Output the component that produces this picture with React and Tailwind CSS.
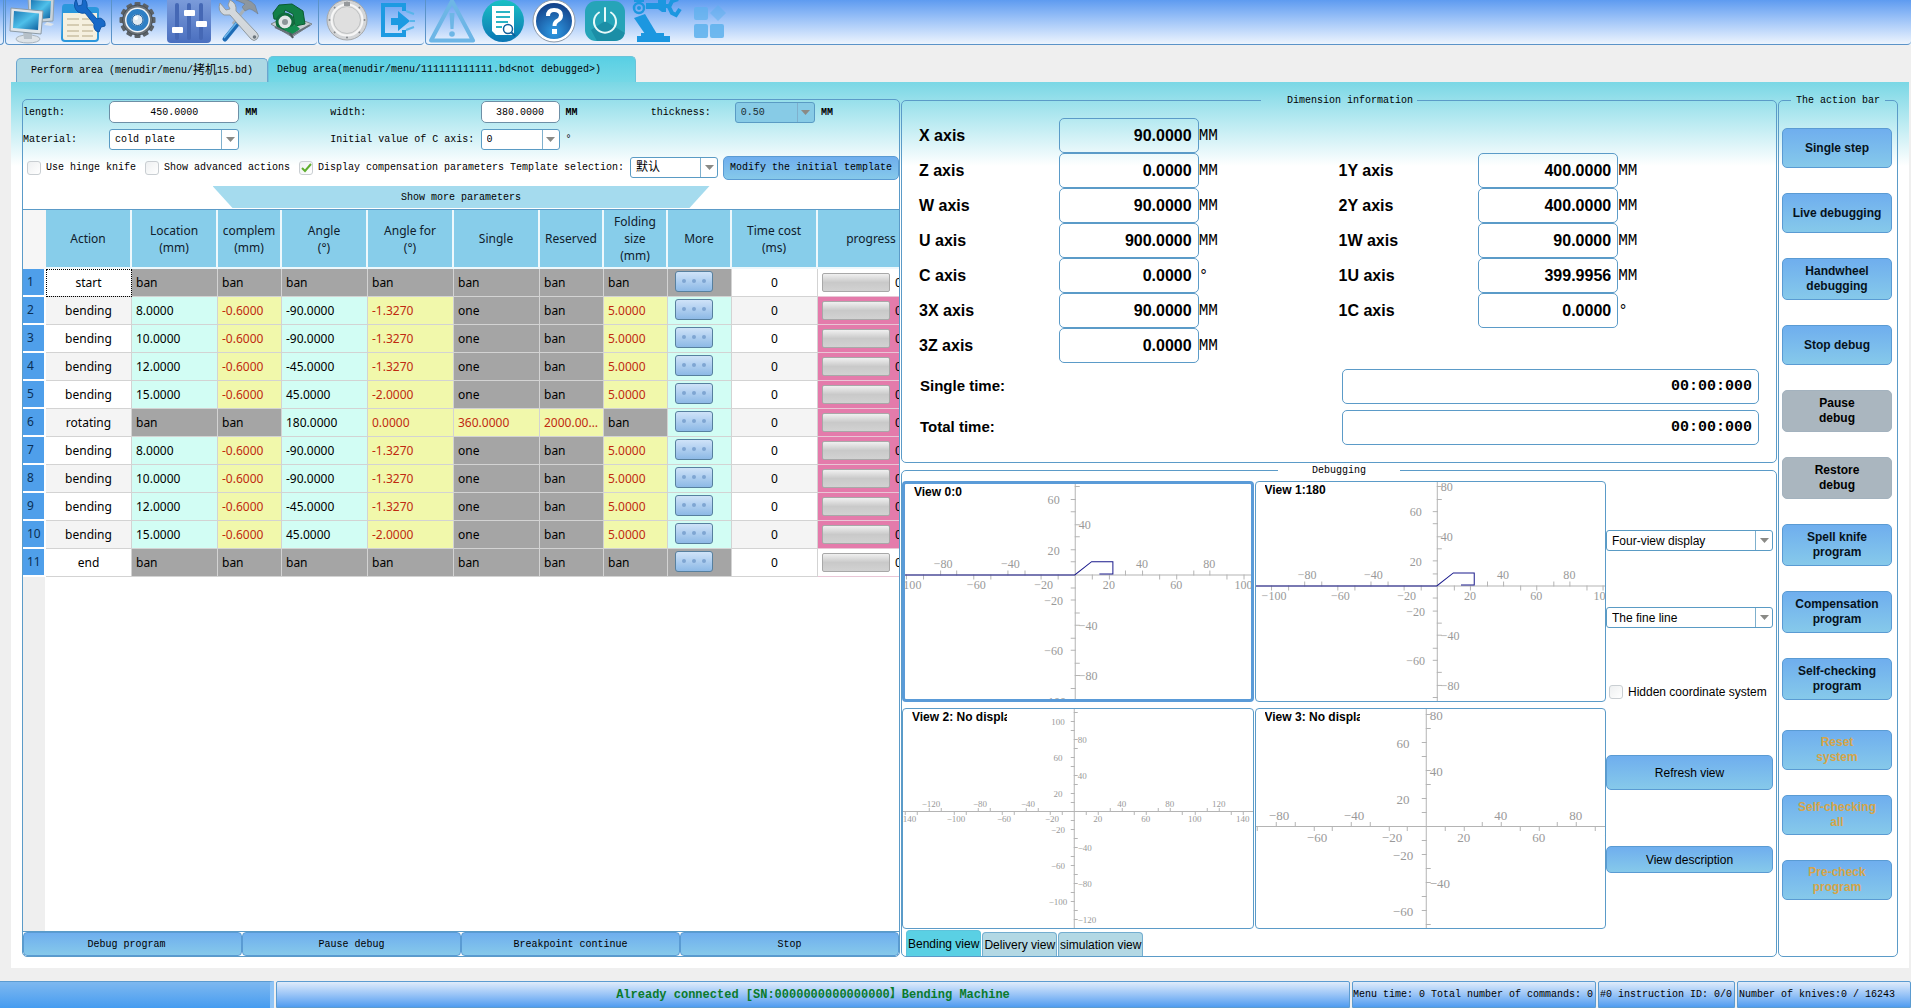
import React, { useState } from 'react';
import clsx from 'clsx';

const MONO = "font-['Liberation_Mono','Noto_Sans_CJK_SC',monospace] text-[10px]";
const ARIAL = "font-['Liberation_Sans',sans-serif]";
const BLUE_BUTTON = 'border border-[#5a9bd3] bg-linear-to-b from-[#6faeee] to-[#86c9ea]';

const TOOLBAR_GROUPS = [
  [
    { name: 'Computer', icon: MonitorsIcon },
    { name: 'Project settings', icon: FolderWrenchIcon },
  ],
  [
    { name: 'System settings', icon: GearIcon },
    { name: 'Parameters', icon: SlidersIcon },
    { name: 'Tools', icon: ToolsIcon },
    { name: 'Knife library', icon: SawIcon },
  ],
  [
    { name: 'Emergency', icon: DiscIcon },
    { name: 'Exit', icon: ExitIcon },
  ],
  [
    { name: 'Alarms', icon: WarningIcon },
    { name: 'Log', icon: LogIcon },
    { name: 'Help', icon: HelpIcon },
    { name: 'Power', icon: PowerIcon },
    { name: 'Robot', icon: RobotIcon },
    { name: 'Modules', icon: BlocksIcon },
  ],
];

const COLUMNS = [
  { lines: ['Action'], width: 86 },
  { lines: ['Location', '(mm)'], width: 86 },
  { lines: ['complem', '(mm)'], width: 64 },
  { lines: ['Angle', '(°)'], width: 86 },
  { lines: ['Angle for', '(°)'], width: 86 },
  { lines: ['Single'], width: 86 },
  { lines: ['Reserved'], width: 64 },
  { lines: ['Folding', 'size', '(mm)'], width: 64 },
  { lines: ['More'], width: 64 },
  { lines: ['Time cost', '(ms)'], width: 86 },
  { lines: ['progress'], width: 108 },
];

const bend = (location, angle, angleFor) => ({
  action: 'bending',
  cells: [location, '-0.6000', angle, angleFor, 'one', 'ban', '5.0000'],
});

const ROWS = [
  { action: 'start', cells: ['ban', 'ban', 'ban', 'ban', 'ban', 'ban', 'ban'] },
  bend('8.0000', '-90.0000', '-1.3270'),
  bend('10.0000', '-90.0000', '-1.3270'),
  bend('12.0000', '-45.0000', '-1.3270'),
  bend('15.0000', '45.0000', '-2.0000'),
  { action: 'rotating', cells: ['ban', 'ban', '180.0000', '0.0000', '360.0000', '2000.0000', 'ban'] },
  bend('8.0000', '-90.0000', '-1.3270'),
  bend('10.0000', '-90.0000', '-1.3270'),
  bend('12.0000', '-45.0000', '-1.3270'),
  bend('15.0000', '45.0000', '-2.0000'),
  { action: 'end', cells: ['ban', 'ban', 'ban', 'ban', 'ban', 'ban', 'ban'] },
];

const AXES = [
  [{ name: 'X axis', value: '90.0000', unit: 'MM' }, null],
  [{ name: 'Z axis', value: '0.0000', unit: 'MM' }, { name: '1Y axis', value: '400.0000', unit: 'MM' }],
  [{ name: 'W axis', value: '90.0000', unit: 'MM' }, { name: '2Y axis', value: '400.0000', unit: 'MM' }],
  [{ name: 'U axis', value: '900.0000', unit: 'MM' }, { name: '1W axis', value: '90.0000', unit: 'MM' }],
  [{ name: 'C axis', value: '0.0000', unit: '°' }, { name: '1U axis', value: '399.9956', unit: 'MM' }],
  [{ name: '3X axis', value: '90.0000', unit: 'MM' }, { name: '1C axis', value: '0.0000', unit: '°' }],
  [{ name: '3Z axis', value: '0.0000', unit: 'MM' }, null],
];

const VIEWS = [
  { title: 'View 0:0', width: 346, height: 214, ox: 170, oy: 90, sx: 1.68, sy: 1.255, size: 12, part: true },
  { title: 'View 1:180', width: 350, height: 218, ox: 181, oy: 103, sx: 1.65, sy: 1.235, size: 12, part: true },
  { title: 'View 2: No display', width: 350, height: 219, ox: 171, oy: 102, sx: 1.205, sy: 0.9, size: 9 },
  { title: 'View 3: No display', width: 350, height: 219, ox: 170, oy: 117, sx: 1.875, sy: 1.4, size: 13 },
];

const ACTIONS = [
  { lines: ['Single step'] },
  { lines: ['Live debugging'] },
  { lines: ['Handwheel', 'debugging'] },
  { lines: ['Stop debug'] },
  { lines: ['Pause', 'debug'], kind: 'disabled' },
  { lines: ['Restore', 'debug'], kind: 'disabled' },
  { lines: ['Spell knife', 'program'] },
  { lines: ['Compensation', 'program'] },
  { lines: ['Self-checking', 'program'] },
  { lines: ['Reset', 'system'], kind: 'system' },
  { lines: ['Self-checking', 'all'], kind: 'system' },
  { lines: ['Pre-check', 'program'], kind: 'system' },
];

/* ---------- toolbar icons ---------- */

function MonitorsIcon() {
  return (
    <svg width="52" height="44" viewBox="5 0 52 44">
      <defs>
        <linearGradient id="screen" x1="0" y1="0" x2="1" y2="1">
          <stop offset="0" stopColor="#1c78b4" />
          <stop offset="0.5" stopColor="#4fc0ea" />
          <stop offset="1" stopColor="#0d5f9e" />
        </linearGradient>
      </defs>
      <path d="M27 -3 L53 -2 L52 21 L40 22 L28 18Z" fill="#c9d3da" stroke="#8fa0ad" />
      <path d="M30 0 L50 1 L49 18 L40 19 L30 16Z" fill="url(#screen)" />
      <path d="M46 22 L53 24 L50 26 L43 25Z" fill="#dfe5ea" />
      <ellipse cx="27" cy="39" rx="12" ry="4" fill="#dde3e8" stroke="#a9b4bd" />
      <path d="M22 32 L31 33 L31 39 L23 39Z" fill="#b6c0c8" />
      <path d="M10 8 L42 11 L40 34 L9 31Z" fill="#dfe5ea" stroke="#8d9ba6" />
      <path d="M13 11 L38 13.500 L37 30 L12 28Z" fill="url(#screen)" />
    </svg>
  );
}

function FolderWrenchIcon() {
  return (
    <svg width="52" height="44" viewBox="57 0 52 44">
      <path d="M61 8 Q61 4 64 4 H72 L75 7 H94 Q98 7 98 10 V38 Q98 42 94 42 H64 Q60 42 60 38Z" fill="#2b97dc" />
      <path d="M62 13 H96 V38 Q96 40 94 40 H64 Q62 40 62 38Z" fill="#f5f0df" />
      <g stroke="#d5ccb2" strokeWidth="2">
        <path d="M66 19 H78 M66 25 H78 M66 31 H78 M66 36 H78 M81 19 H92 M81 25 H92 M81 31 H92 M81 36 H92" />
      </g>
      <path
        d="M75 -1 Q71 7 77 12 Q81 14 84 13 L93 24 Q92 31 98 32 L100 27 L104 26 Q105 20 99 18 L96 19 L86 8 Q87 1 82 -2 L81 5 L77 6Z"
        fill="#1769c8"
        stroke="#0f56a8"
      />
    </svg>
  );
}

function GearIcon() {
  const teeth = [0, 30, 60, 90, 120, 150, 180, 210, 240, 270, 300, 330];
  return (
    <svg width="50" height="44" viewBox="111 0 50 44">
      {teeth.map((angle) => (
        <rect key={angle} x="133.500" y="2" width="6" height="8" rx="1" fill="#5b6268" transform={`rotate(${angle} 136.500 20)`} />
      ))}
      <circle cx="136.500" cy="20" r="15" fill="#6b7278" stroke="#474d52" />
      <circle cx="136.500" cy="20" r="12.500" fill="#f1f4f6" />
      <circle cx="136.500" cy="20" r="8.500" fill="none" stroke="#2f7fc4" strokeWidth="5" />
      <circle cx="136.500" cy="20" r="5.500" fill="#dfe9f1" stroke="#1d5e9b" />
      <circle cx="135" cy="18" r="2" fill="#fff" />
    </svg>
  );
}

function SlidersIcon() {
  return (
    <svg width="52" height="44" viewBox="161 0 52 44">
      <defs>
        <linearGradient id="mixer" x1="0" y1="0" x2="0" y2="1">
          <stop offset="0" stopColor="#7f9fdc" />
          <stop offset="1" stopColor="#4a6fbf" />
        </linearGradient>
      </defs>
      <rect x="166" y="-4" width="44" height="47" rx="4" fill="url(#mixer)" />
      <path d="M176 5 V38 M188 5 V38 M200 5 V38" stroke="#4568b5" strokeWidth="4" strokeLinecap="round" />
      <rect x="171" y="27" width="11" height="6" rx="1" fill="#fff" />
      <rect x="183" y="10" width="11" height="6" rx="1" fill="#fff" />
      <rect x="195" y="21" width="11" height="6" rx="1" fill="#fff" />
    </svg>
  );
}

function ToolsIcon() {
  return (
    <svg width="50" height="44" viewBox="213 0 50 44">
      <path d="M246 6 L232 24" stroke="#a6b0b8" strokeWidth="3" />
      <path d="M237 23 L224 39" stroke="#1c6bb5" strokeWidth="5" strokeLinecap="round" />
      <path d="M236 22 L223 38" stroke="#6db6ea" strokeWidth="1.500" />
      <path d="M235 0 Q247 -3 254 5 L257 14 Q251 9 248 9 L244 11 L241 7 L244 4Z" fill="#8d979f" stroke="#6c757c" strokeWidth="0.500" />
      <path
        d="M219 3 Q216 11 223 15 L229 15 L250 39 Q253 42 256 39 Q259 36 256 33 L235 11 Q236 3 229 0 L227 5 L229 9 L225 10Z"
        fill="#d3d8dc"
        stroke="#8f999f"
      />
      <circle cx="253.500" cy="37" r="1.800" fill="#6c757c" />
    </svg>
  );
}

function SawIcon() {
  return (
    <svg width="53" height="44" viewBox="263 0 53 44">
      <path d="M270 24 L288 15 L311 24 L291 37Z" fill="#c8ced2" stroke="#7d878d" />
      <path d="M272 13 L278 5 L291 4 L302 11 L304 24 L294 26 L292 14 L284 10 L281 20 L273 19Z" fill="#128048" stroke="#0b5a32" />
      <circle cx="284" cy="22" r="8" fill="#e2e7e8" stroke="#0f6c3d" strokeWidth="3" />
      <circle cx="284" cy="22" r="3" fill="#8c9699" />
      <path d="M283 29 L295 25 L299 29 L290 36Z" fill="#138d50" />
      <path d="M274 27 L291 35 L309 25" fill="none" stroke="#66717a" strokeWidth="2" />
      <path d="M289 33 L292 38" stroke="#4e585e" strokeWidth="2" />
    </svg>
  );
}

function DiscIcon() {
  const bolts = [0, 45, 90, 135, 180, 225, 270, 315];
  return (
    <svg width="53" height="44" viewBox="318 0 53 44">
      <circle cx="346" cy="20" r="20" fill="#d3d5d7" stroke="#a5a8ab" />
      <circle cx="346" cy="20" r="15.500" fill="#e3e3e3" stroke="#f6f6f6" strokeWidth="2" />
      <circle cx="346" cy="20" r="13.500" fill="#dfdfdf" stroke="#bfc1c2" />
      {bolts.map((angle) => (
        <circle key={angle} cx="346" cy="2.500" r="1" fill="#85888b" transform={`rotate(${angle} 346 20)`} />
      ))}
      <path d="M343 2 H349 V6 H343Z" fill="#96999c" />
    </svg>
  );
}

function ExitIcon() {
  return (
    <svg width="52" height="44" viewBox="371 0 52 44">
      <path d="M403 11 V5 H382 V35 H403 V30" fill="none" stroke="#1d9ae2" strokeWidth="4" />
      <path d="M390 18 H397 V11 L409 21 L397 31 V25 H390Z" fill="#1d9ae2" />
      <path d="M405 11 L413 14 M409 21 L414 21 M405 30 L413 27" stroke="#58b5ea" strokeWidth="2" />
    </svg>
  );
}

function WarningIcon() {
  return (
    <svg width="52" height="44" viewBox="425 0 52 44">
      <path d="M451 1 L472 40.500 H430Z" fill="none" stroke="#6db6e6" strokeWidth="4" strokeLinejoin="round" />
      <path d="M448.500 13 H453.500 L452.500 29 H449.500Z" fill="#6db6e6" />
      <circle cx="451" cy="34" r="2.800" fill="#6db6e6" />
    </svg>
  );
}

function LogIcon() {
  return (
    <svg width="50" height="44" viewBox="477 0 50 44">
      <defs>
        <linearGradient id="log" x1="0" y1="0" x2="0" y2="1">
          <stop offset="0" stopColor="#1ac0c4" />
          <stop offset="1" stopColor="#0b76b4" />
        </linearGradient>
      </defs>
      <circle cx="502" cy="21" r="21" fill="url(#log)" />
      <path d="M491 6 H513 V35 H495 L491 31Z" fill="#fff" />
      <path d="M495 12 H509 M495 17 H509 M495 22 H507 M495 27 H501" stroke="#2bb3c4" strokeWidth="2" />
      <circle cx="507" cy="29" r="4.500" fill="#fff" stroke="#0f5f9c" strokeWidth="1.500" />
      <path d="M510.500 32.500 L514 36" stroke="#0f5f9c" strokeWidth="2" />
    </svg>
  );
}

function HelpIcon() {
  return (
    <svg width="52" height="44" viewBox="527 0 52 44">
      <defs>
        <radialGradient id="help" cx="0.5" cy="0.8" r="0.8">
          <stop offset="0" stopColor="#2f9be4" />
          <stop offset="1" stopColor="#123f87" />
        </radialGradient>
      </defs>
      <circle cx="553" cy="21" r="21" fill="#fff" stroke="#8d99a8" />
      <circle cx="553" cy="21" r="18" fill="url(#help)" />
      <path d="M547 16 Q547 10 553 10 Q560 10 560 15.500 Q560 19 556 21 Q553.500 22.500 553.500 26" fill="none" stroke="#fff" strokeWidth="4" />
      <rect x="551" y="29" width="5" height="5" fill="#fff" />
    </svg>
  );
}

function PowerIcon() {
  return (
    <svg width="50" height="44" viewBox="579 0 50 44">
      <rect x="584" y="1" width="40" height="40" rx="11" fill="#26a4b8" />
      <path d="M604 21 L624 33 V30 Q624 41 613 41 H596 L590 30Z" fill="#1b8ea6" />
      <path d="M598 12.500 A11 11 0 1 0 610 12.500" fill="none" stroke="#e8fafa" strokeWidth="2" strokeLinecap="round" />
      <path d="M604 8 V21" stroke="#e8fafa" strokeWidth="2" strokeLinecap="round" />
    </svg>
  );
}

function RobotIcon() {
  return (
    <svg width="56" height="44" viewBox="629 0 56 44">
      <circle cx="638" cy="8" r="5" fill="none" stroke="#1c97e0" strokeWidth="2.500" />
      <circle cx="638" cy="8" r="2" fill="#1c97e0" />
      <path d="M633 1 H643" stroke="#1c97e0" strokeWidth="2" />
      <path d="M645 3 H659 V9 H645Z" fill="#1c97e0" />
      <path d="M657 0 H665 V12 H661 L657 9Z" fill="#1c97e0" />
      <path d="M663 6 H669 M677 -1 L671 1 L668 7 L671 13 L675 15 L679 9" fill="none" stroke="#1c97e0" strokeWidth="4" />
      <path d="M633 18 L644 14 L656 34 H644Z" fill="#1c97e0" />
      <path d="M636 42 V36 H640 V33 H663 V36 H669 V42Z" fill="#1c97e0" />
    </svg>
  );
}

function BlocksIcon() {
  return (
    <svg width="50" height="44" viewBox="685 0 50 44" fill="#5cb0ec">
      <rect x="693" y="7" width="14" height="13" rx="2" opacity="0.7" />
      <path d="M717 5 L725 13 L717 21 L709 13Z" opacity="0.5" />
      <rect x="693" y="24" width="14" height="14" rx="2" opacity="0.85" />
      <rect x="709" y="24" width="14" height="14" rx="2" opacity="0.85" />
    </svg>
  );
}

/* ---------- shared controls ---------- */

function Dropdown({ id, label, options, disabled, className, selectClassName }) {
  return (
    <div className={clsx('relative h-[21px] rounded-[3px] border border-[#5a9bc4]', disabled ? 'bg-[#87cbe6]' : 'bg-white', className)}>
      <select
        id={id}
        aria-label={label}
        disabled={disabled}
        className={clsx('block h-full w-full appearance-none pr-5 pl-[5px] text-black outline-none', disabled && 'opacity-80', selectClassName)}
      >
        {options.map((option) => (
          <option key={option}>{option}</option>
        ))}
      </select>
      <span className="pointer-events-none absolute inset-y-0 right-0 flex w-[17px] items-center justify-center border-l border-[#7fb0cd]">
        <svg width="9" height="5" viewBox="0 0 9 5">
          <path d="M0 0 H9 L4.500 5Z" fill="#8a8a86" />
        </svg>
      </span>
    </div>
  );
}

function Checkbox({ label, defaultChecked, className }) {
  return (
    <label className={clsx('flex items-center gap-[5px] whitespace-nowrap', className)}>
      <span className="relative block h-[14px] w-[14px]">
        <input
          type="checkbox"
          defaultChecked={defaultChecked}
          className="peer block h-[14px] w-[14px] appearance-none rounded-[3px] border border-[#c9ced2] bg-linear-to-br from-[#eef0f1] to-white"
        />
        <svg
          className="pointer-events-none absolute inset-0 hidden peer-checked:block"
          width="14"
          height="14"
          viewBox="0 0 14 14"
        >
          <path d="M3 7 L6 10 L12 3" fill="none" stroke="#5fae2e" strokeWidth="2" />
        </svg>
      </span>
      {label}
    </label>
  );
}

function Toolbar() {
  return (
    <header className="flex h-[45px] gap-px overflow-hidden bg-linear-to-b from-[#5e9bf0] to-[#f0f6fd]">
      <div className="w-1 rounded-br-[4px] border-r border-b border-[#5b93c8]" />
      {TOOLBAR_GROUPS.map((group, index) => (
        <div
          key={index}
          className={clsx('flex rounded-b-[4px] border-b border-l border-[#5b93c8]', index === TOOLBAR_GROUPS.length - 1 && 'flex-1')}
        >
          {group.map(({ name, icon: Icon }) => (
            <button key={name} type="button" aria-label={name} className="block">
              <Icon />
            </button>
          ))}
        </div>
      ))}
    </header>
  );
}

/* ---------- left panel ---------- */

function ParameterForm() {
  const field = 'h-[22px] w-full min-w-0 rounded-[5px] border border-[#6d8fa6] bg-white text-center text-black outline-none';
  return (
    <form className={clsx(MONO, 'text-black')}>
      <div className="grid grid-cols-[86fr_130fr_91fr_150fr_79fr_91fr_84fr_80fr_84fr] grid-rows-[24px_30px] items-center">
        <label htmlFor="length">length:</label>
        <input id="length" className={field} defaultValue="450.0000" />
        <span className="pl-[6px] font-bold">MM</span>
        <label htmlFor="width">width:</label>
        <input id="width" className={field} defaultValue="380.0000" />
        <span className="pl-[6px] font-bold">MM</span>
        <label htmlFor="thickness">thickness:</label>
        <Dropdown id="thickness" options={['0.50']} disabled />
        <span className="pl-[6px] font-bold">MM</span>

        <label htmlFor="material">Material:</label>
        <Dropdown id="material" options={['cold plate']} />
        <span />
        <label htmlFor="c-axis">Initial value of C axis:</label>
        <Dropdown id="c-axis" options={['0']} />
        <span className="pl-[6px]">°</span>
      </div>
      <div className="flex h-[27px] items-center pl-1 whitespace-nowrap">
        <Checkbox label="Use hinge knife" />
        <Checkbox label="Show advanced actions" className="ml-[9px]" />
        <Checkbox label="Display compensation parameters" defaultChecked className="ml-[9px]" />
        <label htmlFor="template" className="ml-[6px]">
          Template selection:
        </label>
        <Dropdown id="template" options={['默认']} className="ml-[6px] w-[88px]" selectClassName="text-xs" />
        <button type="button" className={clsx(BLUE_BUTTON, 'ml-[5px] h-6 flex-1 rounded-[5px]')}>
          Modify the initial template
        </button>
      </div>
      <button
        type="button"
        className="mx-auto mt-[5px] block h-[22px] w-[497px] bg-[#a5dbee] [clip-path:polygon(0_0,100%_0,calc(100%-20px)_100%,20px_100%)]"
      >
        Show more parameters
      </button>
    </form>
  );
}

function cellColor(value, column) {
  if (value === 'ban' || value === 'one') return 'bg-[#a5a5a5] text-black';
  if (column === 0 || column === 2) return 'bg-[#d2fdf4] text-black';
  return 'bg-[#f1f8ab] text-[#c02a10]';
}

function ProgramTable() {
  return (
    <div className="mt-px flex-1 overflow-hidden border-t border-[#5b9bc8] bg-[linear-gradient(to_right,#efefef_22px,#ffffff_22px)]">
      <table className="w-[903px] table-fixed border-separate border-spacing-0 font-['Noto_Sans',sans-serif] text-xs text-black">
        <colgroup>
          <col className="w-[23px]" />
          {COLUMNS.map((column) => (
            <col key={column.lines[0]} style={{ width: column.width }} />
          ))}
        </colgroup>
        <thead>
          <tr className="h-[59px]">
            <td className="bg-[#f6f6f6]" />
            {COLUMNS.map((column) => (
              <th
                key={column.lines[0]}
                className="border-r-2 border-b-2 border-[#eef8fc] bg-[#87cdea] p-0 text-center leading-[17px] font-normal text-[#10202c]"
              >
                {column.lines.map((line) => (
                  <span key={line} className="block">
                    {line}
                  </span>
                ))}
              </th>
            ))}
          </tr>
        </thead>
        <tbody>
          {ROWS.map((row, index) => {
            const edge = row.action === 'start' || row.action === 'end';
            const stripe = index % 2 ? 'bg-[#f4f4f4]' : 'bg-white';
            return (
              <tr key={index} className="h-7">
                <th className="border-r-2 border-b-2 border-white bg-[#4f9fea] p-0 pl-1 text-left font-normal text-[#0b2f55]">
                  {index + 1}
                </th>
                <td
                  className={clsx(
                    'border-r border-b border-[#d3d3d3] p-0 text-center',
                    stripe,
                    index === 0 && 'outline outline-dotted -outline-offset-1 outline-black'
                  )}
                >
                  {row.action}
                </td>
                {row.cells.map((value, column) => (
                  <td key={column} className={clsx('truncate border-r border-b border-[#d3d3d3] p-0 pr-1 pl-1', cellColor(value, column))}>
                    {value}
                  </td>
                ))}
                <td className={clsx('border-r border-b border-[#d3d3d3] p-0 pl-[7px]', edge ? 'bg-[#a5a5a5]' : 'bg-[#d2fdf4]')}>
                  <button
                    type="button"
                    aria-label={`More for row ${index + 1}`}
                    className="mb-[3px] flex h-[21px] w-[38px] items-center justify-center gap-[6px] rounded-[3px] border border-[#57809f] bg-linear-to-b from-[#cfe3f8] to-[#8db9e6]"
                  >
                    <i className="h-1 w-1 rounded-full bg-[#7fa6d2]" />
                    <i className="h-1 w-1 rounded-full bg-[#7fa6d2]" />
                    <i className="h-1 w-1 rounded-full bg-[#7fa6d2]" />
                  </button>
                </td>
                <td className={clsx('border-r border-b border-[#d3d3d3] p-0 text-center', stripe)}>0</td>
                <td className={clsx('border-b border-[#e9c6d6] p-0 pl-1', edge ? 'bg-white' : 'bg-[#e47bab]')}>
                  <div className="flex items-center gap-[5px]">
                    <div className="h-[19px] w-[68px] rounded-[2px] border border-[#a8a8a8] bg-linear-to-b from-[#f0f0f0] via-[#c9c9c9] to-[#d2d2d2]" />
                    0%
                  </div>
                </td>
              </tr>
            );
          })}
        </tbody>
      </table>
    </div>
  );
}

function LeftPanel() {
  return (
    <section className="mt-[6px] flex min-w-0 flex-1 basis-0 flex-col overflow-hidden rounded-[5px] border border-[#5b9bc8]">
      <ParameterForm />
      <ProgramTable />
      <div className={clsx(MONO, 'grid grid-cols-4 border-t border-[#5b9bc8] text-black')}>
        {['Debug program', 'Pause debug', 'Breakpoint continue', 'Stop'].map((name, index) => (
          <button key={name} type="button" className={clsx(BLUE_BUTTON, 'h-6 rounded-[4px]', index === 0 && 'pr-3')}>
            {name}
          </button>
        ))}
      </div>
    </section>
  );
}

/* ---------- middle panel ---------- */

function AxisField({ axis, first }) {
  const id = `axis-${axis.name.split(' ')[0]}`;
  return (
    <>
      <label htmlFor={id} className={clsx(first && 'pl-[17px]', 'text-base font-bold')}>
        {axis.name}
      </label>
      <input
        id={id}
        readOnly
        value={axis.value}
        className="h-[35px] w-full min-w-0 rounded-[5px] border border-[#5b9bc8] bg-transparent pr-[6px] text-right text-base font-bold outline-none"
      />
      <span className="font-['Liberation_Mono',monospace] text-base">{axis.unit}</span>
    </>
  );
}

function DimensionPanel() {
  return (
    <fieldset className="min-w-0 rounded-[5px] border border-[#5b9bc8] pb-[17px]">
      <legend className={clsx(MONO, 'mx-auto h-[14px] pr-1 pl-[26px] leading-[15px] text-black')}>Dimension information</legend>
      <div className={clsx(ARIAL, 'pt-[11px] text-black')}>
        {AXES.map(([left, right]) => (
          <div key={left.name} className="grid h-[35px] grid-cols-[157fr_140fr_140fr_140fr_140fr_158fr] items-center">
            <AxisField axis={left} first />
            {right && <AxisField axis={right} />}
          </div>
        ))}
        {['Single time:', 'Total time:'].map((name) => (
          <div key={name} className="mt-[6px] flex h-[35px] items-center pr-[17px] pl-[18px]">
            <label htmlFor={name} className="flex-1 text-[15px] font-bold">
              {name}
            </label>
            <input
              id={name}
              readOnly
              value="00:00:000"
              className="h-[35px] w-[417px] rounded-[5px] border border-[#5b9bc8] bg-transparent pr-[6px] text-right font-['Liberation_Mono',monospace] text-[15px] font-bold outline-none"
            />
          </div>
        ))}
      </div>
    </fieldset>
  );
}

function CoordinateView({ view, active, onSelect }) {
  const { width, height, ox, oy, sx, sy, size, part } = view;
  const steps = [];
  for (let k = -15; k <= 15; k += 1) {
    if (k !== 0) steps.push(k);
  }
  const tick = size > 10 ? 5 : 4;
  const text = (value) => String(value * 10).replace('-', '−');

  return (
    <div
      onClick={onSelect}
      className={clsx('relative min-h-0 min-w-0 overflow-hidden rounded-[4px] bg-white', active ? 'border-3 border-[#5a9bd8]' : 'border border-[#5b9bc8]')}
    >
      <svg
        className="block h-full w-full"
        viewBox={`0 0 ${width} ${height}`}
        preserveAspectRatio="xMidYMid slice"
        fontFamily="Liberation Serif, serif"
        fontSize={size}
        fill="#999"
        stroke="none"
      >
        <path d={`M0 ${oy + 0.5} H${width + 4} M${ox + 0.5} 0 V${height + 4}`} stroke="#b4b4b4" />
        {steps.map((k) => {
          const x = Math.round(ox + k * 10 * sx);
          const far = Math.abs(k) % 4 === 0 || Math.abs(k) % 4 === 3;
          return (
            <g key={k}>
              <path d={`M${x + 0.5} ${oy + (far ? -tick + 1 : 0)} v${tick}`} stroke="#b4b4b4" />
              {k % 2 === 0 && (
                <text
                  x={k < 0 ? x + size * 0.25 : x}
                  y={oy + (far ? -0.85 : 0.85) * size + size * 0.35}
                  textAnchor="middle"
                >
                  {text(k)}
                </text>
              )}
            </g>
          );
        })}
        {steps.map((k) => {
          const y = Math.round(oy - k * 10 * sy);
          const right = Math.abs(k) % 4 === 0 || Math.abs(k) % 4 === 3;
          return (
            <g key={k}>
              <path d={`M${ox + (right ? 0 : -tick + 1)} ${y + 0.5} h${tick}`} stroke="#b4b4b4" />
              {k % 2 === 0 && (
                <text x={right ? ox + 4 : ox - 1.75 * size} y={y + 1 + size * 0.35} textAnchor={right ? 'start' : 'middle'}>
                  {text(k)}
                </text>
              )}
            </g>
          );
        })}
        {part && (
          <path
            d={`M0 ${oy + 0.5} H${ox} l${10 * sx} ${-10.5 * sy} h${12.6 * sx} v${10.5 * sy - 1} h${-8 * sx}`}
            fill="none"
            stroke="#1a1a8c"
          />
        )}
      </svg>
      <h3 className={clsx(ARIAL, 'absolute top-0 left-[9px] w-[95px] overflow-hidden text-xs leading-[16px] font-bold whitespace-nowrap text-black')}>
        {view.title}
      </h3>
    </div>
  );
}

function DebugPanel() {
  const [activeView, setActiveView] = useState(0);
  const [tab, setTab] = useState('Bending view');

  return (
    <fieldset className="flex min-w-0 flex-1 flex-col rounded-[5px] border border-[#5b9bc8]">
      <legend className={clsx(MONO, 'mx-auto h-[14px] px-[34px] leading-[15px] text-black')}>Debugging</legend>
      <div className="flex min-h-0 flex-1 pt-1 pr-[3px]">
        <div className="grid min-w-0 flex-1 grid-cols-2 grid-rows-2 gap-x-px gap-y-[6px]">
          {VIEWS.map((view, index) => (
            <CoordinateView key={view.title} view={view} active={index === activeView} onSelect={() => setActiveView(index)} />
          ))}
        </div>
        <div className={clsx(ARIAL, 'flex w-[167px] flex-col gap-[56px] pt-[49px] text-xs text-black')}>
          <Dropdown label="Display mode" options={['Four-view display']} />
          <Dropdown label="Line style" options={['The fine line']} />
          <Checkbox label="Hidden coordinate system" className="h-[15px] pl-[3px]" />
          <button type="button" className={clsx(BLUE_BUTTON, 'h-[35px] rounded-[5px]')}>
            Refresh view
          </button>
          <button type="button" className={clsx(BLUE_BUTTON, 'h-[27px] rounded-[5px]')}>
            View description
          </button>
        </div>
      </div>
      <div className={clsx(ARIAL, 'flex h-[27px] items-end gap-px pl-1 text-xs text-black')}>
        {['Bending view', 'Delivery view', 'simulation view'].map((name) => (
          <button
            key={name}
            type="button"
            onClick={() => setTab(name)}
            className={clsx(
              'rounded-t-[4px] border border-b-0 px-px',
              tab === name ? 'h-[26px] border-[#5cc4dc] bg-[#5ad0e4]' : 'h-6 border-[#74aed0] bg-[#b3d8e4]'
            )}
          >
            {name}
          </button>
        ))}
      </div>
    </fieldset>
  );
}

/* ---------- action bar ---------- */

function ActionBar() {
  return (
    <fieldset className="w-[120px] rounded-[5px] border border-[#5b9bc8]">
      <legend className={clsx(MONO, 'mx-auto h-[14px] px-[5px] leading-[15px] text-black')}>The action bar</legend>
      <div className={clsx(ARIAL, 'flex flex-col gap-[25px] pt-[21px] pr-[5px] pl-[3px] text-xs leading-[15px] font-bold')}>
        {ACTIONS.map(({ lines, kind }, index) => (
          <button
            key={index}
            type="button"
            disabled={kind === 'disabled'}
            className={clsx(
              'rounded-[5px]',
              lines.length > 1 && kind !== 'system' ? 'h-[42px]' : 'h-10',
              kind === 'disabled' ? 'border border-[#a3b2be] bg-[#aab6bf] text-black' : BLUE_BUTTON,
              kind === 'system' ? 'text-[#d6a548]' : 'text-[#06121c]',
              index === 9 && 'mt-[5px]'
            )}
          >
            {lines.map((line) => (
              <span key={line} className="block">
                {line}
              </span>
            ))}
          </button>
        ))}
      </div>
    </fieldset>
  );
}

function StatusBar() {
  const cell = 'flex items-center rounded-t-[2px] border border-[#5b9bd0] bg-linear-to-b from-[#dfebfa] to-[#4f9cf0] whitespace-nowrap';
  return (
    <footer className={clsx(MONO, 'flex h-[27px] gap-[2px] text-black')}>
      <div className="w-[274px] border-t border-r-4 border-t-[#5b9bd0] border-r-[#8fc4f6] bg-linear-to-b from-[#7db8f0] to-[#459cf0]" />
      <div className={clsx(cell, 'flex-1 justify-center text-xs font-bold text-[#0a7a2c]')}>
        Already connected [SN:0000000000000000】Bending Machine
      </div>
      <div className={clsx(cell, 'w-[244px]')}>Menu time: 0 Total number of commands: 0</div>
      <div className={clsx(cell, 'w-[137px] pl-px')}>#0 instruction ID: 0/0</div>
      <div className={clsx(cell, 'w-[174px] pl-px')}>Number of knives:0 / 16243</div>
    </footer>
  );
}

function App() {
  return (
    <div className="flex min-h-screen flex-col bg-[#efefef]">
      <Toolbar />
      <nav className={clsx(MONO, 'mt-[11px] flex h-[26px] items-end pl-4 text-black')}>
        <button type="button" className="flex h-6 items-center rounded-t-[5px] border border-b-0 border-[#6aa5cf] bg-[#add8e4] px-[14px] whitespace-pre">
          Perform area (menudir/menu/<span className="text-xs">拷机</span>15.bd)
        </button>
        <button type="button" className="h-[26px] rounded-t-[5px] border border-b-0 border-[#6ac4da] bg-linear-to-b from-[#58cfe4] to-[#74d8e6] pr-[34px] pl-2">
          Debug area(menudir/menu/111111111111.bd&lt;not debugged&gt;)
        </button>
      </nav>
      <main className="mr-[2px] ml-[11px] flex flex-1 gap-px bg-[linear-gradient(to_bottom,#7ad7e5_0px,#ffffff_84px)] px-[11px] pt-[11px] pb-[11px]">
        <LeftPanel />
        <div className="flex min-w-0 flex-1 basis-0 flex-col">
          <DimensionPanel />
          <DebugPanel />
        </div>
        <ActionBar />
      </main>
      <div className="h-[13px]" />
      <StatusBar />
    </div>
  );
}

export default App;
